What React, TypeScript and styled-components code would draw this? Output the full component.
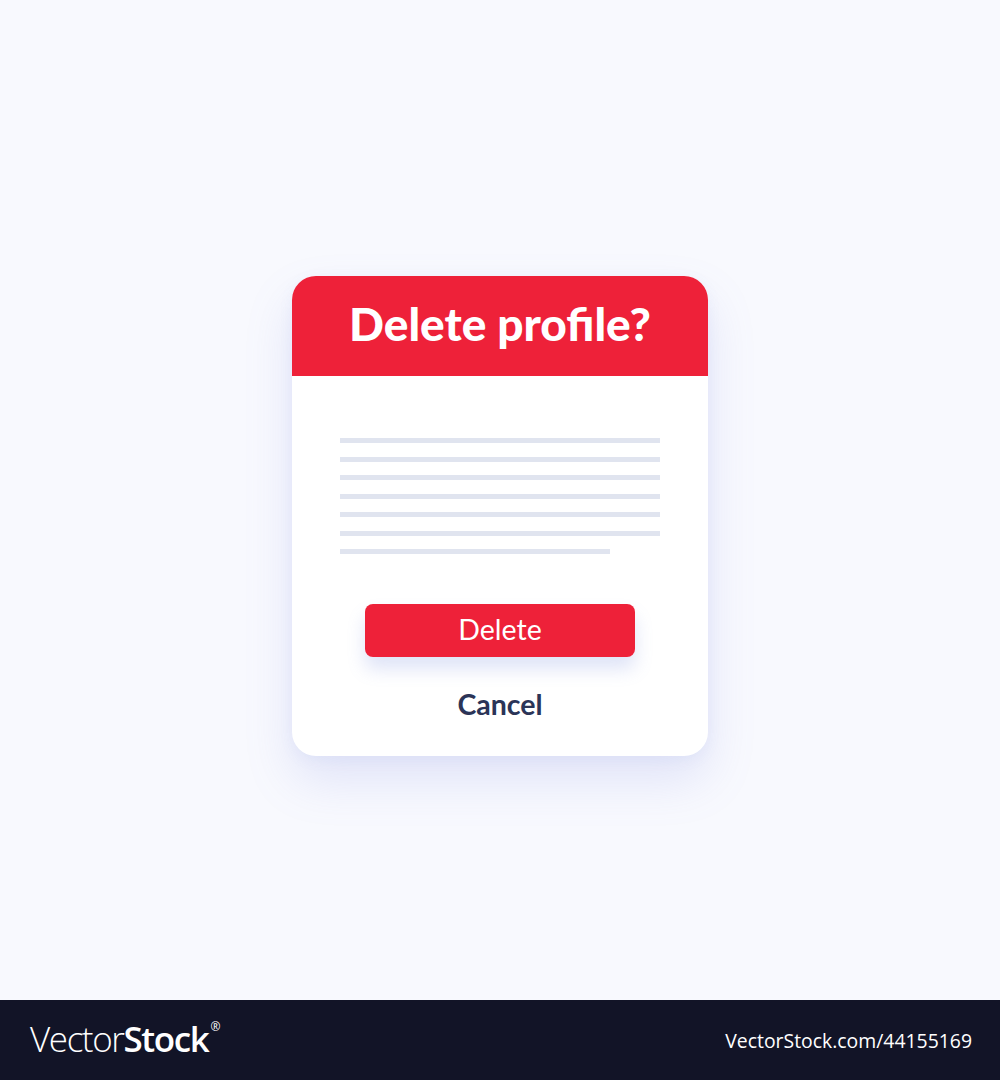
import styled, { createGlobalStyle } from 'styled-components';

const GlobalStyle = createGlobalStyle`
  html, body {
    margin: 0;
    padding: 0;
    background: #f8f9fe;
  }
  body {
    font-family: 'Lato', 'Liberation Sans', sans-serif;
  }
`;

const Page = styled.div`
  width: 1000px;
  height: 1080px;
  display: flex;
  flex-direction: column;
`;

const Stage = styled.main`
  height: 1000px;
  box-sizing: border-box;
  padding-top: 32px;
  display: flex;
  align-items: center;
  justify-content: center;
  background: #f8f9fe;
`;

const Dialog = styled.div`
  width: 416px;
  height: 480px;
  background: #fff;
  border-radius: 24px;
  overflow: hidden;
  display: flex;
  flex-direction: column;
  box-shadow: 0 24px 48px rgba(120, 135, 220, 0.18), 0 4px 14px rgba(120, 135, 220, 0.08);
`;

const DialogHeader = styled.div`
  height: 100px;
  background: #ee2139;
  display: flex;
  align-items: center;
  justify-content: center;
`;

const Title = styled.h1`
  margin: 0;
  color: #fff;
  font-family: 'Lato', 'Liberation Sans', sans-serif;
  font-weight: 900;
  font-size: 46px;
  letter-spacing: 0;
  line-height: 1;
  padding-bottom: 4px;
`;

const Body = styled.div`
  flex: 1;
  display: flex;
  flex-direction: column;
  align-items: center;
  padding-top: 62px;
`;

const TextLines = styled.div`
  width: 320px;
  display: flex;
  flex-direction: column;
  gap: 13.5px;
`;

const Line = styled.div<{ $w?: number }>`
  height: 5px;
  width: ${p => p.$w ?? 320}px;
  background: #e0e4ef;
`;

const DeleteButton = styled.button`
  margin-top: 50px;
  width: 270px;
  height: 53px;
  border: none;
  border-radius: 8px;
  background: #ee2139;
  color: #fff;
  font-family: 'Lato', 'Liberation Sans', sans-serif;
  font-size: 28.5px;
  font-weight: 400;
  padding: 0 0 3px;
  box-shadow: 0 12px 18px rgba(110, 130, 220, 0.22);
  cursor: pointer;
`;

const CancelButton = styled.button`
  margin-top: 30px;
  border: none;
  background: none;
  color: #2b3457;
  font-family: 'Lato', 'Liberation Sans', sans-serif;
  font-size: 28.5px;
  font-weight: 700;
  padding: 0;
  cursor: pointer;
`;

const Footer = styled.footer`
  height: 80px;
  background: #121427;
  display: flex;
  align-items: center;
  justify-content: space-between;
  padding: 0 28px 0 30px;
  box-sizing: border-box;
  color: #fff;
`;

const Brand = styled.div`
  font-family: 'Open Sans', 'Liberation Sans', sans-serif;
  font-size: 35px;
  letter-spacing: -1.4px;
  display: flex;
  align-items: flex-start;
  padding-bottom: 4px;
`;

const BrandThin = styled.span`
  font-weight: 300;
`;

const BrandBold = styled.span`
  font-weight: 600;
`;

const Reg = styled.sup`
  font-size: 12px;
  font-weight: 400;
  margin-left: 2px;
  line-height: 1;
  vertical-align: top;
  margin-top: 6px;
`;

const StockId = styled.div`
  font-family: 'Open Sans', 'Liberation Sans', sans-serif;
  font-size: 19.4px;
  font-weight: 400;
`;

export default function App() {
  return (
    <Page>
      <GlobalStyle />
      <Stage>
        <Dialog>
          <DialogHeader>
            <Title>Delete profile?</Title>
          </DialogHeader>
          <Body>
            <TextLines>
              <Line />
              <Line />
              <Line />
              <Line />
              <Line />
              <Line />
              <Line $w={270} />
            </TextLines>
            <DeleteButton>Delete</DeleteButton>
            <CancelButton>Cancel</CancelButton>
          </Body>
        </Dialog>
      </Stage>
      <Footer>
        <Brand>
          <BrandThin>Vector</BrandThin>
          <BrandBold>Stock</BrandBold>
          <Reg>®</Reg>
        </Brand>
        <StockId>VectorStock.com/44155169</StockId>
      </Footer>
    </Page>
  );
}
